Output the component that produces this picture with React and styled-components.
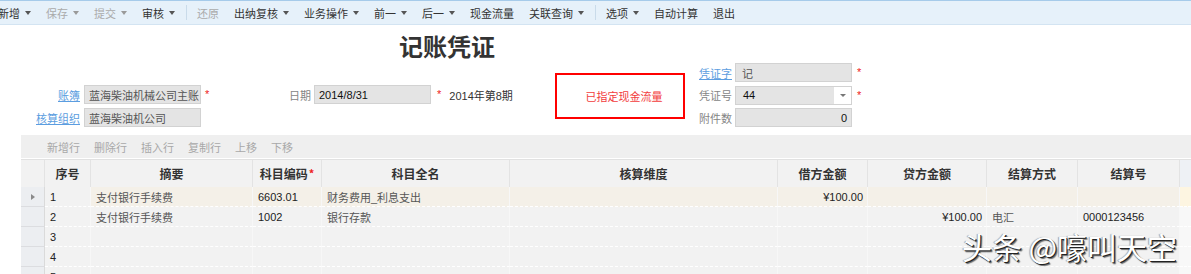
import React from 'react';
import styled, { createGlobalStyle } from 'styled-components';

const Global = createGlobalStyle`
  html, body { margin: 0; padding: 0; background: #fff; overflow: hidden; }
  body {
    font-family: "Liberation Sans", "Noto Sans CJK SC", sans-serif;
    font-size: 11px;
    color: #333;
  }
`;

const Page = styled.div`
  position: relative;
  width: 1191px;
  height: 274px;
  overflow: hidden;
`;

/* ---------- top toolbar ---------- */
const Toolbar = styled.div`
  display: flex;
  align-items: center;
  height: 23px;
  background: #e6f1fa;
  border-top: 1px solid #a6cbea;
  border-bottom: 1px solid #d3e4f2;
  overflow: hidden;
`;

const ToolbarInner = styled.div`
  display: flex;
  align-items: center;
  margin-left: -9px;
`;

const ToolItem = styled.div`
  display: flex;
  align-items: center;
  padding: 0 8px 0 7px;
  height: 23px;
  white-space: nowrap;
  color: ${(p) => (p.$disabled ? '#aaaaaa' : '#333333')};
`;

const Caret = styled.span`
  display: inline-block;
  margin-left: 5px;
  width: 0;
  height: 0;
  border-left: 3px solid transparent;
  border-right: 3px solid transparent;
  border-top: 4px solid ${(p) => (p.$disabled ? '#9a9a9a' : '#555')};
`;

const ToolSep = styled.div`
  width: 1px;
  height: 15px;
  background: #c9dbea;
  margin: 0 3px 0 3px;
`;

/* ---------- header / form ---------- */
const Title = styled.h1`
  margin: 9px 0 0 0;
  padding-left: 399px;
  font-family: "Noto Sans CJK SC", sans-serif;
  font-size: 24px;
  line-height: 24px;
  font-weight: 700;
  color: #333;
`;

const FormRow = styled.div`
  display: grid;
  grid-template-columns: 289px 266px 144px auto;
  align-items: start;
  height: 72px;
  margin-top: 5px;
`;

const FieldGrid = styled.div`
  display: grid;
  grid-template-columns: ${(p) => p.$labelW}px 117px auto;
  grid-auto-rows: 19px;
  column-gap: ${(p) => p.$colGap}px;
  row-gap: ${(p) => p.$rowGap}px;
  margin-top: ${(p) => p.$top}px;
  align-items: center;
`;

const LinkLabel = styled.a`
  justify-self: ${(p) => p.$justify || 'end'};
  color: #5b9de0;
  text-decoration: underline;
  white-space: nowrap;
  cursor: pointer;
`;

const PlainLabel = styled.span`
  justify-self: ${(p) => p.$justify || 'end'};
  color: #858585;
  white-space: nowrap;
`;

const Input = styled.div`
  box-sizing: border-box;
  position: relative;
  height: 19px;
  width: 117px;
  background: #e4e4e4;
  border: 1px solid #d2d2d2;
  padding: 0 ${(p) => (p.$right ? 4 : 0)}px 0 ${(p) => p.$pad ?? 4}px;
  display: flex;
  align-items: center;
  justify-content: ${(p) => (p.$right ? 'flex-end' : 'flex-start')};
  white-space: nowrap;
  overflow: hidden;
  color: ${(p) => (p.$dark ? '#111' : '#555')};
`;

const DropBtn = styled.div`
  position: absolute;
  top: 0;
  right: 0;
  width: 17px;
  height: 17px;
  background: #fff;
  display: flex;
  align-items: center;
  justify-content: center;
  &::after {
    content: '';
    width: 0;
    height: 0;
    border-left: 3px solid transparent;
    border-right: 3px solid transparent;
    border-top: 3px solid #777;
  }
`;

const Star = styled.span`
  color: #ee2222;
  font-size: 11px;
  line-height: 11px;
  margin-left: ${(p) => p.$ml || 0}px;
`;

const DateGroup = styled.div`
  display: flex;
  align-items: center;
  height: 19px;
  margin-top: 22px;
`;

const DateLabel = styled.span`
  color: #858585;
  margin-right: 3px;
`;

const Period = styled.span`
  margin-left: 8px;
  color: #333;
`;

const NoticeBox = styled.div`
  box-sizing: border-box;
  margin-top: 10px;
  width: 130px;
  height: 46px;
  border: 2px solid #ff0000;
  display: flex;
  align-items: center;
  justify-content: center;
  color: #f23c3c;
  padding-left: 8px;
`;

/* ---------- grid area ---------- */
const GridArea = styled.div`
  margin-left: 21px;
`;

const SubToolbar = styled.div`
  display: flex;
  align-items: center;
  gap: 14px;
  height: 23px;
  padding-left: 26px;
  background: #efefef;
  color: #a8a8a8;
`;

const COLS = '24px 46px 162px 69px 188px 268px 90px 119px 91px 102px 1fr';

const HeaderRow = styled.div`
  display: grid;
  grid-template-columns: ${COLS};
  height: 27px;
  margin-top: 1px;
  border-top: 1px solid #e1e1e1;
  background: #f2f2f2;
`;

const HeadCell = styled.div`
  display: flex;
  align-items: center;
  justify-content: center;
  border-right: 1px solid #e3e3e3;
  font-family: "Noto Sans CJK SC", sans-serif;
  font-weight: 700;
  font-size: 12px;
  color: #333;
  white-space: nowrap;
  &:last-child { border-right: none; background: #eef1f5; }
`;

const BodyRow = styled.div`
  display: grid;
  grid-template-columns: ${COLS};
  height: 20px;
  background: ${(p) => (p.$selected ? '#f4f0e8' : '#f2f2f2')};
`;

const IndicatorCell = styled.div`
  box-sizing: border-box;
  background: #eceef1;
  border-bottom: 1px solid #dcdde0;
  border-right: 1px solid #dadada;
  display: flex;
  align-items: center;
  justify-content: center;
`;

const Arrow = styled.span`
  width: 0;
  height: 0;
  border-top: 3px solid transparent;
  border-bottom: 3px solid transparent;
  border-left: 4px solid #8a8a8a;
`;

const Cell = styled.div`
  box-sizing: border-box;
  display: flex;
  align-items: center;
  justify-content: ${(p) => (p.$align === 'right' ? 'flex-end' : 'flex-start')};
  padding: 0 ${(p) => (p.$align === 'right' ? 4 : 0)}px 0 ${(p) => (p.$align === 'right' ? 0 : 5)}px;
  border-bottom: 1px dashed #ffffff;
  border-right: 1px solid #f7f7f7;
  background: ${(p) => p.$bg || 'transparent'};
  color: ${(p) => (p.$num ? '#222' : '#555')};
  white-space: nowrap;
  overflow: hidden;
`;

const FillerCell = styled.div`
  background: ${(p) => (p.$selected ? '#fdf5e1' : '#f8f8f8')};
  border-bottom: 1px dashed #ffffff;
  box-sizing: border-box;
`;

const Watermark = styled.div`
  position: absolute;
  left: 962px;
  top: 231px;
  font-family: "Noto Sans CJK SC", sans-serif;
  font-size: 30px;
  line-height: 30px;
  color: #ffffff;
  white-space: nowrap;
  text-shadow: 1px 1px 0 #222, 2px 2px 1px rgba(0,0,0,0.55), -1px 0 1px rgba(0,0,0,0.35);
`;

const toolbarItems = [
  { t: '新增', caret: true },
  { t: '保存', caret: true, disabled: true },
  { t: '提交', caret: true, disabled: true },
  { t: '审核', caret: true },
  { sep: true },
  { t: '还原', disabled: true },
  { t: '出纳复核', caret: true },
  { t: '业务操作', caret: true },
  { t: '前一', caret: true },
  { t: '后一', caret: true },
  { t: '现金流量' },
  { t: '关联查询', caret: true },
  { sep: true },
  { t: '选项', caret: true },
  { t: '自动计算' },
  { t: '退出' },
];

const headers = ['', '序号', '摘要', '科目编码', '科目全名', '核算维度', '借方金额', '贷方金额', '结算方式', '结算号', ''];

const rows = [
  { seq: '1', summary: '支付银行手续费', code: '6603.01', name: '财务费用_利息支出', debit: '¥100.00', selected: true },
  { seq: '2', summary: '支付银行手续费', code: '1002', name: '银行存款', credit: '¥100.00', method: '电汇', no: '0000123456' },
  { seq: '3' },
  { seq: '4' },
  { seq: '5' },
];

export default function App() {
  return (
    <Page>
      <Global />
      <Toolbar>
        <ToolbarInner>
          {toolbarItems.map((it, i) =>
            it.sep ? (
              <ToolSep key={i} />
            ) : (
              <ToolItem key={i} $disabled={it.disabled}>
                {it.t}
                {it.caret && <Caret $disabled={it.disabled} />}
              </ToolItem>
            )
          )}
        </ToolbarInner>
      </Toolbar>

      <Title>记账凭证</Title>

      <FormRow>
        <FieldGrid $labelW={80} $colGap={4} $rowGap={4} $top={22}>
          <LinkLabel>账簿</LinkLabel>
          <Input>蓝海柴油机械公司主账</Input>
          <Star>*</Star>
          <LinkLabel>核算组织</LinkLabel>
          <Input>蓝海柴油机公司</Input>
          <span />
        </FieldGrid>

        <DateGroup>
          <DateLabel>日期</DateLabel>
          <Input $dark>2014/8/31</Input>
          <Star $ml={6}>*</Star>
          <Period>2014年第8期</Period>
        </DateGroup>

        <NoticeBox>已指定现金流量</NoticeBox>

        <FieldGrid $labelW={31} $colGap={5} $rowGap={3.5} $top={0}>
          <LinkLabel $justify="start">凭证字</LinkLabel>
          <Input $pad={6}>记</Input>
          <Star>*</Star>
          <PlainLabel $justify="start">凭证号</PlainLabel>
          <Input $pad={7} $dark>
            44
            <DropBtn />
          </Input>
          <Star>*</Star>
          <PlainLabel $justify="start">附件数</PlainLabel>
          <Input $right $dark>0</Input>
          <span />
        </FieldGrid>
      </FormRow>

      <GridArea>
        <SubToolbar>
          <span>新增行</span>
          <span>删除行</span>
          <span>插入行</span>
          <span>复制行</span>
          <span>上移</span>
          <span>下移</span>
        </SubToolbar>

        <HeaderRow>
          {headers.map((h, i) => (
            <HeadCell key={i}>
              {h}
              {h === '科目编码' && <Star $ml={1}>*</Star>}
            </HeadCell>
          ))}
        </HeaderRow>

        {rows.map((r) => {
          const bg = r.selected ? '#f4f0e8' : undefined;
          return (
            <BodyRow key={r.seq} $selected={r.selected}>
              <IndicatorCell>{r.selected && <Arrow />}</IndicatorCell>
              <Cell $num $bg="#f2f2f2">{r.seq}</Cell>
              <Cell $bg={bg}>{r.summary}</Cell>
              <Cell $num $bg={bg}>{r.code}</Cell>
              <Cell $bg={bg}>{r.name}</Cell>
              <Cell $bg={bg} />
              <Cell $num $align="right" $bg={bg}>{r.debit}</Cell>
              <Cell $num $align="right" $bg={bg}>{r.credit}</Cell>
              <Cell $bg={bg}>{r.method}</Cell>
              <Cell $num $bg={bg}>{r.no}</Cell>
              <FillerCell $selected={r.selected} />
            </BodyRow>
          );
        })}
      </GridArea>

      <Watermark>头条 @嚎叫天空</Watermark>
    </Page>
  );
}
